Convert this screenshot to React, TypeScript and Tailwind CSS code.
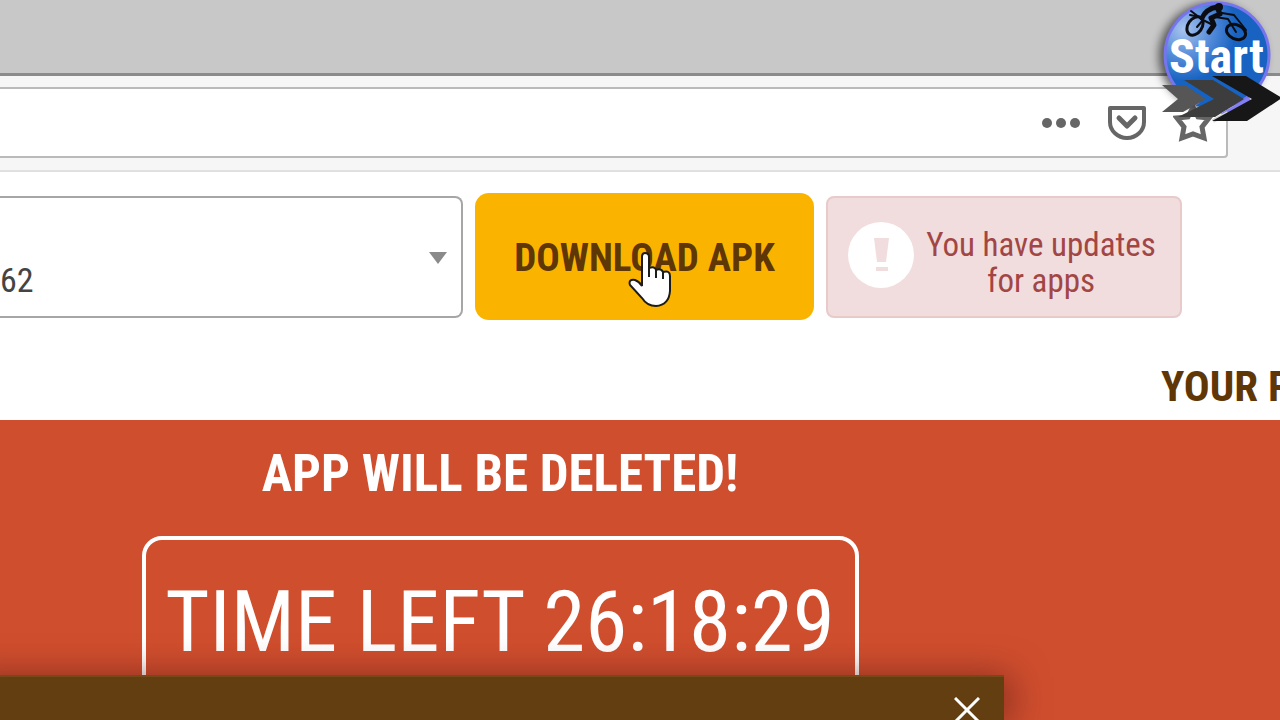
import type { ReactNode } from "react";

const StartBadge = () => (
  <svg
    viewBox="1140 0 140 150"
    className="pointer-events-none absolute top-0 right-0 z-20 h-[150px] w-[140px]"
    role="img"
    aria-label="Start"
  >
    <defs>
      <radialGradient id="disc" cx="0.18" cy="0.25" r="0.5">
        <stop offset="0" stopColor="#a9c4ee" />
        <stop offset="0.5" stopColor="#5a8fdc" />
        <stop offset="1" stopColor="#1863c2" />
      </radialGradient>
      <filter id="soft" x="-30%" y="-30%" width="160%" height="160%">
        <feGaussianBlur stdDeviation="5" />
      </filter>
    </defs>
    <circle cx="1212" cy="56" r="53" fill="#000" opacity="0.6" filter="url(#soft)" />
    <circle cx="1217" cy="55" r="52" fill="url(#disc)" stroke="#7775ee" strokeWidth="3" />
    <g fill="none" stroke="#0b0d12" strokeLinecap="round" strokeLinejoin="round">
      <ellipse cx="1195" cy="26" rx="7" ry="10" strokeWidth="3" transform="rotate(35 1195 26)" />
      <ellipse cx="1236" cy="32" rx="10" ry="7" strokeWidth="3" transform="rotate(25 1236 32)" />
      <path
        d="M1191 11 L1203 20 L1197 27 M1203 20 L1213 25 M1222 13 L1234 15 L1246 30 M1215 17 L1228 19 L1236 32 M1190 15 L1200 17"
        strokeWidth="2"
      />
      <path d="M1202 18 Q1206 9 1217 7 L1220 14 L1211 18 L1214 25 L1209 32" strokeWidth="5" />
    </g>
    <circle cx="1219" cy="7" r="4" fill="#0b0d12" />
    <text
      x="1169"
      y="73"
      fill="#fff"
      className="font-['Roboto_Condensed','Roboto',sans-serif] text-[48px] font-bold"
    >
      Start
    </text>
    <path d="M1162 85 H1185 L1206 99 L1183 112 H1162 L1178 99 Z" fill="#565656" />
    <path d="M1180 80 H1186 L1215 99 L1203 107 L1195 106 L1206 99 Z" fill="#1463c4" />
    <path d="M1184 80 H1213 L1244 99 L1215 117 H1178 L1214 99 Z" fill="#3d3d3d" />
    <path d="M1250 99 L1222 115" stroke="#8280f4" strokeWidth="4" />
    <path d="M1228 113 L1213 121" stroke="#d4d4d8" strokeWidth="4" />
    <path d="M1212 76 H1246 L1282 98 L1247 121 H1212 L1252 99 Z" fill="#171717" />
  </svg>
);

const HandCursor = () => (
  <svg
    viewBox="0 0 44 56"
    className="pointer-events-none absolute top-[59px] left-[153px] h-[56px] w-[44px]"
    aria-hidden="true"
  >
    <path
      d="M14 5 Q14 1 17 1 Q21 1 21 5 V16 Q27 14 28 18 Q33 16 35 20 Q42 18 42 24 V39 Q41 53 28 54 Q19 54 14 46 L2 33 Q0 27 7 28 Q12 30 14 34 Z"
      fill="#fff"
      stroke="#1c1c1c"
      strokeWidth="2"
    />
    <path d="M21 16 V25 M28 18 V26 M35 20 V27" stroke="#1c1c1c" strokeWidth="2" />
  </svg>
);

const ToolButton = ({ label, children }: { label: string; children: ReactNode }) => (
  <button type="button" aria-label={label} className="flex h-10 w-10 items-center justify-center">
    {children}
  </button>
);

const BrowserBar = () => (
  <header>
    <div className="h-[73px] bg-[#c8c8c8]" />
    <div className="border-t-[3px] border-b-2 border-t-[#8b8b8b] border-b-[#e0e0e0] bg-[#f6f6f6] pt-[11px] pr-[52px] pb-3">
      <div className="flex h-[71px] items-center gap-[26px] rounded-r-sm border-2 border-l-0 border-[#bababa] bg-white pr-[13px]">
        <input type="text" aria-label="Address" className="h-full min-w-0 flex-1 outline-none" />
        <ToolButton label="Page actions">
          <svg viewBox="0 0 40 40" className="h-10 w-10" fill="#666">
            <circle cx="6" cy="20" r="5" />
            <circle cx="20" cy="20" r="5" />
            <circle cx="34" cy="20" r="5" />
          </svg>
        </ToolButton>
        <ToolButton label="Save to Pocket">
          <svg viewBox="0 0 40 40" className="h-10 w-10" fill="none" stroke="#666" strokeWidth="4">
            <path d="M3 5 H37 V19 A17 16 0 0 1 3 19 Z" strokeLinejoin="round" />
            <path d="M12 15 L20 23 L28 15" strokeWidth="5" strokeLinecap="round" strokeLinejoin="round" />
          </svg>
        </ToolButton>
        <ToolButton label="Bookmark">
          <svg viewBox="0 0 40 40" className="h-10 w-10" fill="none" stroke="#666" strokeWidth="5">
            <path d="M20 4 L25 14 L36 15 L29 24 L31 35 L20 31 L9 35 L11 24 L4 15 L15 14 Z" />
          </svg>
        </ToolButton>
      </div>
    </div>
  </header>
);

const ActionRow = () => (
  <div className="flex items-center gap-3 pt-[21px] pr-[98px]">
    <div className="relative flex-1">
      <select
        aria-label="Version"
        className="block h-[122px] w-full appearance-none rounded-r-lg border-2 border-l-0 border-[#a6a6a6] bg-white pt-12 text-[34px] text-[#444]"
      >
        <option>62</option>
      </select>
      <svg
        viewBox="0 0 18 12"
        className="pointer-events-none absolute top-[56px] right-4 h-3 w-[18px]"
        aria-hidden="true"
      >
        <path d="M0 0 H18 L9 12 Z" fill="#8a8a8a" />
      </svg>
    </div>
    <button
      type="button"
      className="relative h-[127px] w-[339px] rounded-[14px] bg-[#fab400] pt-1 text-[39px] font-bold text-[#5f3606]"
    >
      DOWNLOAD APK
      <HandCursor />
    </button>
    <div
      role="alert"
      className="flex h-[122px] w-[356px] items-center gap-3 rounded-lg border-2 border-[#e8cacb] bg-[#f1dddd] pr-6 pb-1 pl-5"
    >
      <svg viewBox="0 0 66 66" className="h-[66px] w-[66px] shrink-0" aria-hidden="true">
        <circle cx="33" cy="33" r="33" fill="#fff" />
        <path d="M26 16 H41 L38 40 H29 Z M28 45 H40 V49 H28 Z" fill="#f1dddd" />
      </svg>
      <p className="flex-1 pt-4 text-center text-[33px] leading-9 whitespace-nowrap text-[#a24645]">
        You have updates
        <br />
        for apps
      </p>
    </div>
  </div>
);

const Countdown = () => (
  <section className="flex-1 bg-[#cf4e2e] pt-6 text-white">
    <div className="flex w-[1000px] flex-col items-center">
      <h1 className="text-[51px] leading-[60px] font-bold">APP WILL BE DELETED!</h1>
      <div className="mt-8 h-[200px] w-[717px] rounded-[20px] border-4 border-white pt-[34px] text-center text-[85px] leading-[96px] whitespace-nowrap">
        TIME LEFT 26:18:29
      </div>
    </div>
  </section>
);

const PopupWindow = () => (
  <div className="absolute bottom-0 -left-10 flex h-[45px] w-[1044px] justify-end border-t-2 border-[#744b18] bg-[#623e10] pt-5 pr-6 shadow-[6px_2px_36px_rgba(80,20,20,0.6)]">
    <button type="button" aria-label="Close" className="h-6 w-[26px]">
      <svg viewBox="0 0 26 26" className="h-[26px] w-[26px]">
        <path d="M1 1 L25 25 M25 1 L1 25" stroke="#fff" strokeWidth="3" />
      </svg>
    </button>
  </div>
);

export default function App() {
  return (
    <div className="relative flex h-screen flex-col overflow-hidden bg-white font-['Roboto_Condensed','Roboto',sans-serif]">
      <BrowserBar />
      <StartBadge />
      <main className="flex flex-1 flex-col">
        <ActionRow />
        <div className="flex h-[100px] items-end justify-end overflow-hidden pb-1">
          <h2 className="w-[119px] overflow-hidden text-[43px] leading-[60px] font-bold whitespace-nowrap text-[#5f3606]">
            YOUR P
          </h2>
        </div>
        <Countdown />
      </main>
      <PopupWindow />
    </div>
  );
}
